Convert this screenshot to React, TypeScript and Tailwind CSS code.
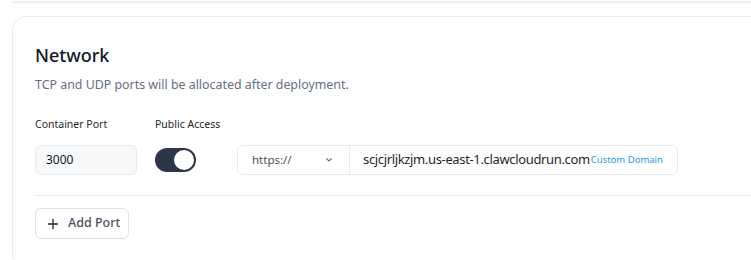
import React from "react";

export default function App() {
  return (
    <div className="w-[751px] h-[260px] overflow-hidden bg-white relative" style={{ fontFamily: '"Noto Sans", "Open Sans", sans-serif' }}>
      <div className="ml-[12px] w-[800px] h-[2px] border-b border-[#e6e8ec] rounded-b-[12px] shadow-[0_1px_3px_rgba(0,0,0,0.08)]" />
      <div className="ml-[12px] mt-[14px] w-[800px] h-[250px] border border-[#e8eaee] rounded-[14px] pl-[22px] pt-[26px]">
        <div className="text-[18px] font-medium text-[#111827] leading-[24px] whitespace-nowrap">Network</div>
        <div className="mt-[9px] text-[12.4px] text-[#667085] leading-[18px] whitespace-nowrap">TCP and UDP ports will be allocated after deployment.</div>
        <div className="mt-[22px] flex text-[10.5px] text-[#24282c] leading-[16px] whitespace-nowrap">
          <div className="w-[120px]">Container Port</div>
          <div>Public Access</div>
        </div>
        <div className="mt-[13px] flex items-center">
          <div className="w-[102px] h-[30px] rounded-[6px] bg-[#f7f8fa] border border-[#e8eaee] flex items-center pl-[10px] text-[12px] text-[#111824]">3000</div>
          <div className="ml-[18px] w-[41px] h-[24px] rounded-full bg-[#2d3648] relative">
            <div className="absolute right-[2px] top-[2px] w-[20px] h-[20px] rounded-full bg-white" />
          </div>
          <div className="ml-[41px] h-[30px] w-[441px] border border-[#e8eaee] rounded-[6px] flex items-center whitespace-nowrap">
            <div className="w-[112px] h-full flex items-center justify-between pl-[14px] pr-[16px] border-r border-[#e8eaee] text-[11.5px] text-[#485264]">
              <span>https://</span>
              <svg width="8" height="6" viewBox="0 0 8 6" fill="none"><path d="M1.5 1.5 L4 4 L6.5 1.5" stroke="#667085" strokeWidth="1.2" /></svg>
            </div>
            <span className="ml-[13px] text-[13px] text-[#24282c] tracking-[-0.35px]">scjcjrljkzjm.us-east-1.clawcloudrun.com</span>
            <span className="ml-[1px] text-[9.5px] text-[#219bf4]">Custom Domain</span>
          </div>
        </div>
        <div className="mt-[20px] h-px bg-[#e8eaee]" />
        <div className="mt-[12px] w-[94px] h-[31px] border border-[#dfe2ea] rounded-[6px] flex items-center pl-[11px] text-[12.5px] font-medium text-[#485264] whitespace-nowrap">
          <svg width="12" height="12" viewBox="0 0 12 12" fill="none"><path d="M6 1 V11 M1 6 H11" stroke="#24282c" strokeWidth="1.3" /></svg>
          <span className="ml-[9px]">Add Port</span>
        </div>
      </div>
    </div>
  );
}
